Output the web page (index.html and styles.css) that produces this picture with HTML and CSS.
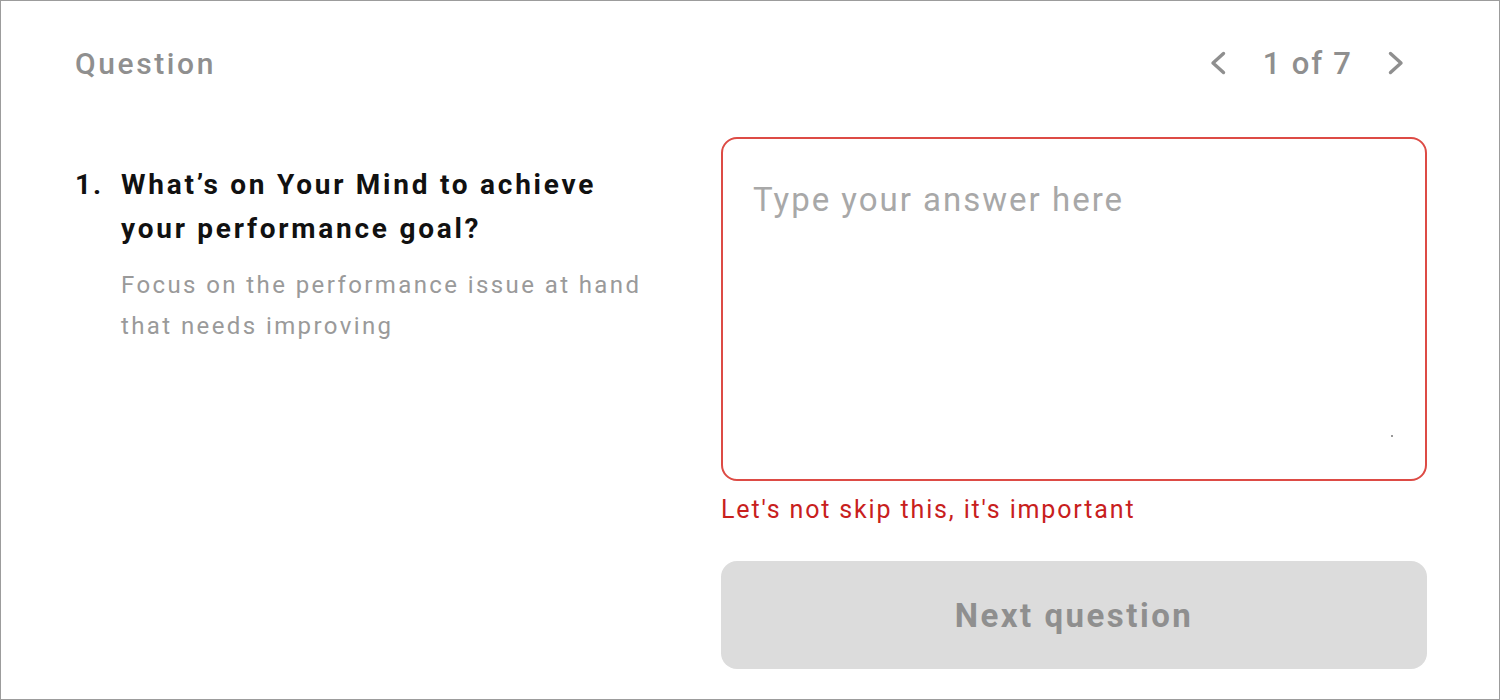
FILE: index.html
```html
<!DOCTYPE html>
<html lang="en">
<head>
<meta charset="utf-8">
<title>Question</title>
<link rel="stylesheet" href="styles.css">
</head>
<body>
<div class="frame">
  <header class="header">
    <div class="label">Question</div>
    <nav class="pager">
      <svg class="chev" width="18" height="26" viewBox="0 0 18 26" aria-hidden="true"><path d="M14.5 3.5 L4 13 L14.5 22.5" fill="none" stroke="#8f8f8f" stroke-width="3.4" stroke-linecap="round" stroke-linejoin="round"/></svg>
      <span class="count">1 of 7</span>
      <svg class="chev" width="18" height="26" viewBox="0 0 18 26" aria-hidden="true"><path d="M3.5 3.5 L14 13 L3.5 22.5" fill="none" stroke="#8f8f8f" stroke-width="3.4" stroke-linecap="round" stroke-linejoin="round"/></svg>
    </nav>
  </header>
  <main class="body">
    <section class="question">
      <div class="q-num">1.</div>
      <div class="q-main">
        <h2 class="q-title">What’s on Your Mind to achieve your performance goal?</h2>
        <p class="q-hint">Focus on the performance issue at hand that needs improving</p>
      </div>
    </section>
    <section class="answer">
      <div class="field">
        <textarea class="input" placeholder="Type your answer here"></textarea>
        <span class="grip"></span>
      </div>
      <div class="error">Let's not skip this, it's important</div>
      <button class="next" type="button">Next question</button>
    </section>
  </main>
</div>
</body>
</html>
```
FILE: styles.css
```css
* { box-sizing: border-box; }
html, body { margin: 0; padding: 0; background: #fff; }
body { font-family: Roboto, "Noto Sans", Arial, sans-serif; }

.frame {
  width: 1500px;
  height: 700px;
  border: 1px solid #9c9c9c;
  padding: 0 72px 0 74px;
  display: flex;
  flex-direction: column;
}

.header {
  display: flex;
  justify-content: space-between;
  align-items: center;
  height: 126px;
  padding-bottom: 2px;
}
.label {
  font-size: 30px;
  font-weight: 500;
  color: #8f8f8f;
  letter-spacing: 2.6px;
}
.pager {
  display: flex;
  align-items: center;
  gap: 36px;
  margin-right: 22px;
}
.chev { display: block; }
.count {
  font-size: 31px;
  font-weight: 500;
  color: #8f8f8f;
  letter-spacing: 1.8px;
  margin-right: -1.8px;
}

.body {
  display: grid;
  grid-template-columns: 1fr 706px;
  column-gap: 40px;
  padding-top: 10px;
}

.question {
  display: flex;
  padding-top: 26px;
}
.q-num {
  flex: none;
  width: 46px;
  font-size: 28px;
  font-weight: 700;
  line-height: 44px;
  color: #111;
  letter-spacing: 2px;
}
.q-main {
  width: 540px;
}
.q-title {
  margin: 0;
  font-size: 28px;
  font-weight: 700;
  line-height: 44px;
  color: #111;
  letter-spacing: 2.75px;
}
.q-hint {
  margin: 14px 0 0;
  font-size: 24px;
  line-height: 41px;
  color: #9a9a9a;
  letter-spacing: 2.4px;
}

.field {
  position: relative;
  height: 344px;
}
.input {
  display: block;
  width: 100%;
  height: 100%;
  border: 2px solid #dd4b45;
  border-radius: 16px;
  padding: 41px 30px;
  font-family: inherit;
  font-size: 33px;
  letter-spacing: 2px;
  color: #333;
  resize: none;
  outline: none;
  background: #fff;
}
.input::placeholder { color: #a8a8a8; }
.grip {
  position: absolute;
  right: 34px;
  bottom: 44px;
  width: 2px;
  height: 2px;
  background: #777;
  border-radius: 1px;
}

.error {
  margin-top: 14px;
  font-size: 25px;
  line-height: 30px;
  color: #c8201d;
  letter-spacing: 1.85px;
}

.next {
  margin-top: 36px;
  height: 108px;
  width: 100%;
  border: none;
  border-radius: 16px;
  background: #dcdcdc;
  font-family: inherit;
  font-size: 33px;
  font-weight: 700;
  letter-spacing: 2.5px;
  color: #8f8f8f;
  cursor: default;
}
```
